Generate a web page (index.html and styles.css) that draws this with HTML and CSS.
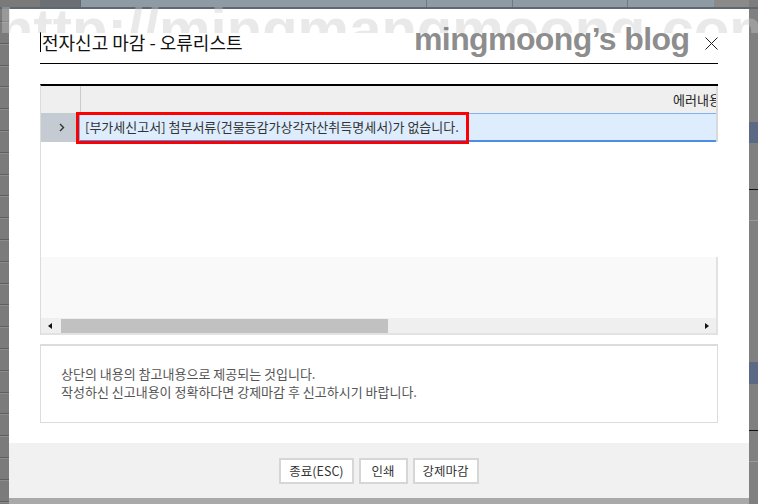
FILE: index.html
```html
<!DOCTYPE html>
<html>
<head>
    <meta charset="utf-8">
    <title>전자신고 마감 - 오류리스트</title>
    <link rel="stylesheet" href="styles.css">
</head>
<body>
    <div class="desk">
        <div class="topbar"></div>
        <div class="leftbar"></div>

        <div class="dialog">
            <div class="dialog-body">
                <div class="dialog-header">
                    <h2 class="title"><span class="caret"></span>전자신고 마감 - 오류리스트</h2>
                    <svg class="close" width="13" height="13" viewBox="0 0 13 13">
                        <path d="M0.5 0.5 L12.5 12.5 M12.5 0.5 L0.5 12.5" stroke="#222" stroke-width="1" fill="none"/>
                    </svg>
                </div>

                <div class="grid">
                    <div class="grid-head">
                        <div class="row-hd"></div>
                        <div class="col-hd">에러내용</div>
                    </div>
                    <div class="grid-row">
                        <div class="row-hd">
                            <svg width="6" height="9" viewBox="0 0 6 9">
                                <path d="M1 1 L4.5 4.5 L1 8" stroke="#333" stroke-width="1.4" fill="none"/>
                            </svg>
                        </div>
                        <div class="cell">[부가세신고서] 첨부서류(건물등감가상각자산취득명세서)가 없습니다.</div>
                    </div>
                    <div class="grid-empty"></div>
                    <div class="grid-fill">
                        <div class="fill"></div>
                        <div class="hscroll">
                            <span class="arrow-left"></span>
                            <span class="thumb"></span>
                            <span class="arrow-right"></span>
                        </div>
                    </div>
                    <!-- highlight box -->
                    <div class="mark"></div>
                </div>

                <div class="notice">
                    <p>상단의 내용의 참고내용으로 제공되는 것입니다.</p>
                    <p>작성하신 신고내용이 정확하다면 강제마감 후 신고하시기 바랍니다.</p>
                </div>
            </div>
            <div class="dialog-footer">
                <button type="button">종료(ESC)</button>
                <button type="button">인쇄</button>
                <button type="button">강제마감</button>
            </div>
        </div>

        <div class="rightbar"></div>
        <div class="bottombar"></div>

        <div class="watermark">http://mingmangmoong.com</div>
        <div class="blog-mark">mingmoong’s blog</div>
    </div>
</body>
</html>
```

FILE: styles.css
```css
body {
    margin: 0;
    font-family: "Noto Sans CJK KR", "Noto Sans", sans-serif;
    background-color: #7b7b7b;
}

.desk {
    position: relative;
    width: 758px;
    height: 504px;
    overflow: hidden;
    display: grid;
    grid-template-columns: 9px 740px 9px;
    grid-template-rows: 9px 489px 6px;
}

/* window behind the dialog */
.topbar {
    grid-column: 1 / 4;
    background:
        linear-gradient(to bottom, transparent 7px, #5d6873 7px),
        linear-gradient(to right,
            #7a7a7a 0 40px,
            #6c7074 40px 80px,
            #5f6a74 80px 81px,
            #8e9ba5 81px 426px,
            #6d7a85 426px 427px,
            #8e9ba5 427px 512px,
            #6d7a85 512px 513px,
            #8e9ba5 513px 627px,
            #6d7a85 627px 628px,
            #8e9ba5 628px 714px,
            #8a8a8a 714px 749px,
            #7d7d7d 749px);
}

.leftbar {
    grid-column: 1;
    grid-row: 2 / 4;
    background: repeating-linear-gradient(to bottom,
        #7b7b7b 0 12px,
        #5f5f5f 12px 13px,
        #8c8c8c 13px 14px,
        #7b7b7b 14px 21.8px);
}

.rightbar {
    grid-column: 3;
    grid-row: 2 / 4;
    background: linear-gradient(to bottom,
        #808080 0 113px,
        #5b6984 113px 134px,
        #808080 134px 180px,
        #111 180px 181px,
        #808080 181px 211px,
        #999 211px 212px,
        #808080 212px 353px,
        #5b6984 353px 375px,
        #808080 375px 421px,
        #111 421px 422px,
        #808080 422px 452px,
        #999 452px 453px,
        #808080 453px);
}

.bottombar {
    grid-column: 2;
    grid-row: 3;
    background-color: #a9a9a9;
}

/* dialog */
.dialog {
    grid-column: 2;
    grid-row: 2;
    display: flex;
    flex-direction: column;
    background-color: #fff;
}

.dialog-body {
    flex: 1;
    padding: 0 31px 20px;
}

.dialog-header {
    height: 55px;
    box-sizing: border-box;
    padding-top: 22px;
    border-bottom: 1px solid #000;
    display: flex;
    justify-content: space-between;
    align-items: flex-start;
}

.title {
    margin: 0;
    font-size: 18px;
    line-height: 22px;
    font-weight: normal;
    color: #111;
    display: flex;
    align-items: center;
}

.caret {
    display: inline-block;
    width: 1px;
    height: 20px;
    margin-right: 1px;
    background-color: #000;
}

.close {
    margin-top: 6px;
}

/* error grid */
.grid {
    position: relative;
    margin-top: 20px;
    border-top: 2px solid #000;
    border-left: 1px solid #dcdcdc;
    border-bottom: 2px solid #e2e2e2;
    font-size: 13px;
    color: #333;
}

.grid-head,
.grid-row {
    display: flex;
    border-right: 2px solid #d9d9d9;
}

.grid-head {
    height: 27px;
    background-color: #efefef;
}

.row-hd {
    width: 39px;
    flex-shrink: 0;
    border-right: 1px solid #cbcbcb;
    display: flex;
    align-items: center;
    justify-content: center;
}

.col-hd {
    flex: 1;
    overflow: hidden;
    white-space: nowrap;
    padding-left: 592px;
    line-height: 27px;
    color: #222;
}

.grid-row {
    height: 29px;
}

.grid-row .row-hd {
    background-color: #c5cbd2;
    border-right: 1px solid #78acef;
    padding-left: 3px;
    box-sizing: border-box;
}

.cell {
    flex: 1;
    box-sizing: border-box;
    border-top: 1px solid #7fb2f0;
    border-bottom: 2px solid #4a8fe6;
    background-color: #ddedfd;
    padding-left: 5px;
    line-height: 26px;
    white-space: nowrap;
    overflow: hidden;
}

.grid-empty {
    height: 115px;
}

.grid-fill {
    border-right: 2px solid #e2e2e2;
}

.fill {
    height: 61px;
    background-color: #f9f9f9;
}

.hscroll {
    height: 15px;
    background-color: #efefef;
    display: flex;
    align-items: center;
}

.arrow-left {
    width: 0;
    height: 0;
    margin-left: 7px;
    border-top: 3px solid transparent;
    border-bottom: 3px solid transparent;
    border-right: 4px solid #111;
}

.thumb {
    height: 14px;
    width: 327px;
    margin-left: 9px;
    background-color: #c1c1c1;
}

.arrow-right {
    width: 0;
    height: 0;
    margin-left: auto;
    margin-right: 7px;
    border-top: 3px solid transparent;
    border-bottom: 3px solid transparent;
    border-left: 4px solid #111;
}

.mark {
    position: absolute;
    left: 35px;
    top: 26px;
    width: 393px;
    height: 32px;
    box-sizing: border-box;
    border: 3px solid #f00;
}

/* message box */
.notice {
    margin-top: 9px;
    border: 1px solid #dcdcdc;
    border-top-width: 2px;
    padding: 19px 20px 21px;
    font-size: 13px;
    line-height: 18px;
    color: #555;
}

.notice p {
    margin: 0;
}

/* footer */
.dialog-footer {
    height: 55px;
    background-color: #f1f1f1;
    display: flex;
    justify-content: center;
    align-items: center;
    gap: 5px;
}

.dialog-footer button {
    height: 26px;
    min-width: 49px;
    padding: 0 8px;
    font-family: "Noto Sans CJK KR", "Noto Sans", sans-serif;
    font-size: 12.5px;
    color: #333;
    background-color: #fff;
    border: 2px solid #d6d6d6;
}

/* blog watermarks */
.watermark {
    position: absolute;
    left: 0;
    top: 0;
    width: 758px;
    height: 33px;
    overflow: hidden;
    font-family: "Liberation Sans", Arial, sans-serif;
    font-weight: bold;
    font-size: 58px;
    line-height: 58px;
    text-indent: -2px;
    white-space: nowrap;
    color: rgba(200, 200, 200, 0.4);
}

.blog-mark {
    position: absolute;
    left: 414px;
    top: 23px;
    font-family: "Liberation Sans", Arial, sans-serif;
    font-weight: bold;
    font-size: 32px;
    line-height: 32px;
    letter-spacing: -0.6px;
    color: rgba(110, 110, 110, 0.8);
    white-space: nowrap;
}
```
